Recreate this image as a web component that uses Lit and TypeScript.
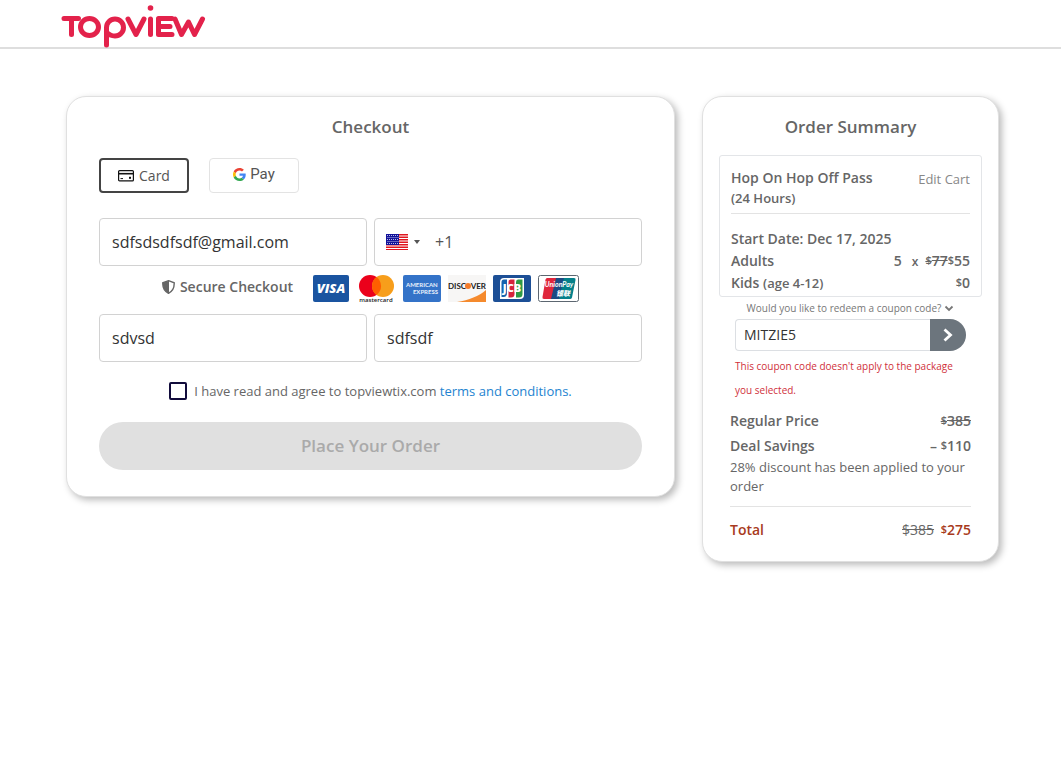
import { LitElement, html, css, svg } from "lit";
import { customElement, state } from "lit/decorators.js";

const logo = html`<svg class="logo" width="146" height="44" viewBox="0 0 146 44" role="img" aria-label="TopView">
  <g fill="none" stroke="#e3224b" stroke-width="5" stroke-linecap="round" stroke-linejoin="round">
    <path d="M4 13.500H18.500M11.500 13.500V29.500" />
    <ellipse cx="29.500" cy="22" rx="9" ry="8.500" />
    <path d="M46.500 40V22.500A8.500 8.500 0 1 1 55 31C51.500 31 49 30 46.500 27" />
    <path d="M68 14L76 29.500L84 14" />
    <path d="M90.500 14V29.500" />
    <path d="M112 13.500H98.500V29.500H112M98.500 21.500H110" />
    <path d="M115 14L121.500 29.500L128.500 17L134.500 29.500L142.500 14" />
  </g>
  <circle cx="90.500" cy="3" r="2.800" fill="#e3224b" />
</svg>`;

const cardIcon = html`<svg width="16" height="12" viewBox="0 0 16 12" aria-hidden="true">
  <rect x="0.600" y="0.600" width="14.800" height="10.300" rx="1" fill="none" stroke="#111" stroke-width="1.200" />
  <path d="M1 3.700H15" stroke="#111" stroke-width="1.600" />
  <path d="M2.500 8.600H5" stroke="#111" stroke-width="1" />
  <rect x="11" y="6.800" width="2" height="2" fill="#111" />
</svg>`;

const googleIcon = html`<svg width="13" height="13" viewBox="0 0 48 48" aria-hidden="true">
  <path fill="#EA4335" d="M24 9.500c3.540 0 6.710 1.220 9.210 3.600l6.850-6.850C35.900 2.380 30.470 0 24 0 14.620 0 6.510 5.380 2.560 13.220l7.980 6.190C12.430 13.720 17.740 9.500 24 9.500z" />
  <path fill="#4285F4" d="M46.980 24.550c0-1.570-.15-3.090-.38-4.550H24v9.020h12.940c-.58 2.960-2.260 5.480-4.780 7.180l7.730 6c4.510-4.180 7.090-10.360 7.090-17.650z" />
  <path fill="#FBBC05" d="M10.530 28.590c-.48-1.450-.76-2.990-.76-4.590s.27-3.140.76-4.590l-7.980-6.190C.92 16.460 0 20.120 0 24c0 3.880.92 7.540 2.560 10.780l7.970-6.190z" />
  <path fill="#34A853" d="M24 48c6.480 0 11.930-2.130 15.890-5.810l-7.730-6c-2.150 1.450-4.920 2.300-8.160 2.300-6.260 0-11.570-4.220-13.470-9.910l-7.980 6.190C6.510 42.620 14.620 48 24 48z" />
</svg>`;

const flag = html`<svg width="22" height="16" viewBox="0 0 22 16" role="img" aria-label="United States">
  <rect width="22" height="16" fill="#fff" />
  ${[0, 2.5, 5, 7.5, 10, 12.5, 15].map((y) => svg`<rect y=${y} width="22" height="1.500" fill="#e0161f" />`)}
  <rect width="13" height="11" fill="#12129a" />
  ${[1, 3, 5, 7, 9].map((y, r) =>
    [1, 3, 5, 7, 9, 11].map((x) => svg`<rect x=${x + (r % 2 ? 0.5 : 0)} y=${y} width="1" height="1" fill="#b9bbe6" />`)
  )}
</svg>`;

const shield = html`<svg width="13" height="14" viewBox="0 0 13 14" aria-hidden="true">
  <path d="M6.500 0.700L12.200 2.800C12.400 7.500 10.600 11.300 6.500 13.300C2.400 11.300 0.600 7.500 0.800 2.800Z" fill="#fff" stroke="#666" stroke-width="1.400" />
  <path d="M7 0.700V13.300C2.400 11.300 0.600 7.500 0.800 2.800Z" fill="#666" />
</svg>`;

const visa = html`<svg width="36" height="27" viewBox="0 0 36 27" role="img" aria-label="Visa">
  <rect width="36" height="27" rx="2" fill="#1a54a0" />
  <text x="18" y="18" text-anchor="middle" font-size="13" font-weight="800" font-style="italic" fill="#fff">VISA</text>
</svg>`;

const mastercard = html`<svg width="40" height="28" viewBox="-3 0 40 28" role="img" aria-label="Mastercard">
  <circle cx="11" cy="11" r="11" fill="#eb001b" />
  <circle cx="24" cy="11" r="11" fill="#f79e1b" />
  <path d="M17.500 2.100A11 11 0 0 1 17.500 19.900A11 11 0 0 1 17.500 2.100Z" fill="#ff5f00" />
  <text x="17" y="27" text-anchor="middle" font-size="6" font-weight="600" fill="#222">mastercard</text>
</svg>`;

const amex = html`<svg width="38" height="27" viewBox="0 0 38 27" role="img" aria-label="American Express">
  <rect width="38" height="27" rx="2" fill="#3473c8" />
  <g class="narrow" fill="#e8f1fc" font-size="6" font-weight="700">
    <text x="3" y="12">AMERICAN</text>
    <text x="35" y="19" text-anchor="end">EXPRESS</text>
  </g>
</svg>`;

const discover = html`<svg width="38" height="27" viewBox="0 0 38 27" role="img" aria-label="Discover">
  <rect width="38" height="27" fill="#f7f6f5" />
  <path d="M38 15V27H9C21 25 31 21 38 15Z" fill="#f58a2d" />
  <g class="narrow" font-size="8" font-weight="700" fill="#222">
    <text x="0" y="14">DISC</text>
    <text x="38" y="14" text-anchor="end">VER</text>
  </g>
  <circle cx="20" cy="11" r="3" fill="#f47b2a" />
</svg>`;

const jcb = html`<svg width="38" height="27" viewBox="0 0 38 27" role="img" aria-label="JCB">
  <rect width="38" height="27" rx="2" fill="#1c4f96" />
  <path d="M11 3H31V20Q31 24 27 24H7V7Q7 3 11 3Z" fill="#fff" />
  <path d="M11 4.500H14V18Q14 22 10.500 22H8.500V7Q8.500 4.500 11 4.500Z" fill="#1763ae" />
  <path d="M17.500 4.500H21.500V19Q21.500 22.500 18 22.500H15.500V7Q15.500 4.500 17.500 4.500Z" fill="#d6223c" />
  <path d="M25 4.500H29.500V19Q29.500 22.500 26 22.500H23V7Q23 4.500 25 4.500Z" fill="#2f9a45" />
  <text x="19" y="17" text-anchor="middle" font-size="11" font-weight="800" fill="#fff">JCB</text>
</svg>`;

const unionpay = html`<svg width="41" height="27" viewBox="0 0 41 27" role="img" aria-label="UnionPay">
  <rect x="0.500" y="0.500" width="40" height="26" rx="2" fill="#fff" stroke="#5c6670" />
  <path d="M9 3H20L15 24H6Q4 24 4.500 22L7.500 4.500Q8 3 9 3Z" fill="#e0263c" />
  <path d="M18 3H28L23 24H13Z" fill="#1d4b83" />
  <path d="M26 3H36Q38 3 37.500 5L34 22.500Q33.500 24 32 24H21Z" fill="#04808a" />
  <text class="narrow" x="21" y="12" text-anchor="middle" font-size="7" font-weight="700" font-style="italic" fill="#fff">UnionPay</text>
  <text class="cjk" x="25" y="21" text-anchor="middle" font-size="7" font-weight="900" font-style="italic" fill="#fff">银联</text>
</svg>`;

@customElement("app-root")
export class AppRoot extends LitElement {
  @state() private agreed = false;

  static styles = css`
    :host {
      display: block;
      font-family: "Open Sans", "Noto Sans", sans-serif;
      font-size: 14px;
      color: #666;
      background: #fff;
    }
    * { box-sizing: border-box; }
    svg { display: block; flex: none; }
    h1, h2, h3, p { margin: 0; font-weight: inherit; }
    .cjk { font-family: "Noto Sans CJK SC", sans-serif; }
    .narrow { font-family: Lato, sans-serif; }
    .header {
      height: 49px;
      padding: 5px 60px 0;
      border-bottom: 2px solid #dedede;
    }
    .page {
      display: flex;
      align-items: flex-start;
      gap: 27px;
      padding: 47px 62px 48px 66px;
    }
    .panel {
      background: #fff;
      border: 1px solid #e0e0e0;
      border-radius: 20px;
      box-shadow: 3px 3px 7px rgba(0, 0, 0, 0.27);
    }
    .checkout { flex: 1; min-width: 0; padding: 18px 32px 26px; }
    .summary { width: 297px; padding: 18px 16px 19px; }
    .title {
      font-size: 17px;
      font-weight: 600;
      line-height: 24px;
      text-align: center;
    }
    .tabs { display: flex; gap: 20px; margin-top: 19px; }
    .tab {
      display: flex;
      align-items: center;
      justify-content: center;
      gap: 5px;
      width: 90px;
      height: 35px;
      padding: 0;
      border: 1px solid #e3e3e3;
      border-radius: 4px;
      background: #fff;
      font: 14px/20px "Open Sans", sans-serif;
      color: #555;
    }
    .tab.active { border: 2px solid #444; }
    .gpay {
      gap: 4px;
      padding-bottom: 3px;
      font: 15px/18px Roboto, sans-serif;
    }
    .fields {
      display: grid;
      grid-template-columns: 1fr 1fr;
      gap: 7px;
    }
    .fields.first { margin-top: 25px; }
    .fields.second { margin-top: 12px; }
    .field {
      display: flex;
      align-items: center;
      width: 100%;
      min-width: 0;
      height: 48px;
      padding: 0 12px;
      border: 1px solid #d2d2d2;
      border-radius: 4px;
      background: #fff;
      font: 16px/24px "Open Sans", sans-serif;
      color: #333;
    }
    .phone { padding: 0 11px; }
    .country {
      display: flex;
      align-items: center;
      gap: 6px;
      padding: 0;
      border: 0;
      background: none;
    }
    .number {
      flex: 1;
      min-width: 0;
      margin-left: 15px;
      padding: 0;
      border: 0;
      outline: 0;
      font: inherit;
      color: #555;
    }
    .secure {
      display: flex;
      align-items: flex-start;
      justify-content: center;
      height: 27px;
      margin-top: 9px;
      font-weight: 600;
      line-height: 24px;
    }
    .badge { display: flex; align-items: center; gap: 5px; margin-right: 20px; }
    .cards { display: flex; gap: 7px; }
    .terms {
      display: flex;
      align-items: center;
      justify-content: center;
      gap: 7px;
      margin-top: 20px;
      font-size: 13px;
      line-height: 18px;
    }
    .tick {
      appearance: none;
      width: 18px;
      height: 18px;
      margin: 0;
      border: 2px solid #120c3c;
      border-radius: 2px;
      background: #fff;
    }
    .tick:checked { background: #120c3c; }
    .link { color: #2383d0; text-decoration: none; }
    .place {
      display: block;
      width: 100%;
      height: 48px;
      margin-top: 22px;
      border: 0;
      border-radius: 24px;
      background: #e0e0e0;
      font: 600 17px/24px "Open Sans", sans-serif;
      color: #aaa;
    }
    .item {
      padding: 12px 11px 2px;
      margin-top: 16px;
      border: 1px solid #e3e5e8;
      border-radius: 3px;
      font-weight: 600;
      line-height: 22px;
    }
    .item-head {
      display: flex;
      justify-content: space-between;
      padding-bottom: 5px;
      margin-bottom: 14px;
      border-bottom: 1px solid #e3e3e3;
      line-height: 20px;
    }
    .item-title { font-size: 14px; }
    .medium { font-size: 13px; line-height: 1; }
    .edit { font-size: 13px; font-weight: 400; line-height: 22px; color: #888; text-decoration: none; }
    .row { display: flex; justify-content: space-between; }
    .cur { font-size: 11px; vertical-align: 2px; line-height: 0; }
    .times { margin: 0 7px 0 10px; font-size: 12px; line-height: 1; }
    .coupon-toggle {
      display: flex;
      align-items: center;
      justify-content: center;
      gap: 3px;
      width: 100%;
      height: 22px;
      padding: 0;
      border: 0;
      background: none;
      font: 10px/22px "Open Sans", sans-serif;
      color: #777;
    }
    .coupon { display: flex; height: 32px; margin: 0 16px; }
    .code {
      flex: 1;
      min-width: 0;
      padding: 0 8px;
      border: 1px solid #dcdfe3;
      border-right: 0;
      border-radius: 4px 0 0 4px;
      font: 14px/20px "Open Sans", sans-serif;
      color: #333;
    }
    .apply {
      display: flex;
      align-items: center;
      justify-content: center;
      width: 36px;
      padding: 0;
      border: 0;
      border-radius: 0 16px 16px 0;
      background: #6c757d;
    }
    .error {
      margin: 3px 16px 0;
      font-size: 10px;
      line-height: 24px;
      color: #d0303a;
    }
    .totals {
      margin: 6px 11px 0;
      font-weight: 600;
      line-height: 25px;
    }
    .note { font-size: 13px; font-weight: 400; line-height: 19px; }
    .total {
      margin-top: 10px;
      padding-top: 10px;
      border-top: 1px solid #e3e3e3;
      color: #a83a20;
    }
    .was { margin-right: 3px; font-weight: 400; color: #666; }
  `;

  render() {
    return html`
      <header class="header">${logo}</header>
      <main class="page">
        <section class="panel checkout">
          <h1 class="title">Checkout</h1>
          <div class="tabs">
            <button class="tab active" type="button">${cardIcon}<span>Card</span></button>
            <button class="tab gpay" type="button" aria-label="Google Pay">${googleIcon}<span>Pay</span></button>
          </div>
          <div class="fields first">
            <input class="field" type="email" aria-label="Email" .value=${"sdfsdsdfsdf@gmail.com"} />
            <div class="field phone">
              <button class="country" type="button" aria-label="Country code">
                ${flag}
                <svg width="6" height="4" viewBox="0 0 6 4"><path d="M0 0H6L3 4Z" fill="#555" /></svg>
              </button>
              <input class="number" type="tel" aria-label="Phone number" .value=${"+1"} />
            </div>
          </div>
          <div class="secure">
            <span class="badge">${shield}<span>Secure Checkout</span></span>
            <span class="cards">${visa}${mastercard}${amex}${discover}${jcb}${unionpay}</span>
          </div>
          <div class="fields second">
            <input class="field" type="text" aria-label="First name" .value=${"sdvsd"} />
            <input class="field" type="text" aria-label="Last name" .value=${"sdfsdf"} />
          </div>
          <div class="terms">
            <input
              id="agree"
              class="tick"
              type="checkbox"
              .checked=${this.agreed}
              @change=${(e: Event) => (this.agreed = (e.target as HTMLInputElement).checked)}
            />
            <label for="agree">I have read and agree to topviewtix.com <a class="link" href="#terms">terms and conditions.</a></label>
          </div>
          <button class="place" type="button" ?disabled=${!this.agreed}>Place Your Order</button>
        </section>

        <aside class="panel summary">
          <h2 class="title">Order Summary</h2>
          <div class="item">
            <div class="item-head">
              <h3 class="item-title">Hop On Hop Off Pass<br /><span class="medium">(24 Hours)</span></h3>
              <a class="edit" href="#cart">Edit Cart</a>
            </div>
            <p>Start Date: Dec 17, 2025</p>
            <div class="row">
              <span>Adults</span>
              <span>5<span class="times">x</span><s><span class="cur">$</span>77</s><span class="cur">$</span>55</span>
            </div>
            <div class="row">
              <span>Kids <span class="medium">(age 4-12)</span></span>
              <span><span class="cur">$</span>0</span>
            </div>
          </div>
          <button class="coupon-toggle" type="button">
            Would you like to redeem a coupon code?
            <svg width="10" height="7" viewBox="0 0 10 7"><path d="M1.500 1.500L5 5L8.500 1.500" fill="none" stroke="#777" stroke-width="1.800" /></svg>
          </button>
          <div class="coupon">
            <input class="code" type="text" aria-label="Coupon code" .value=${"MITZIE5"} />
            <button class="apply" type="button" aria-label="Apply coupon">
              <svg width="10" height="14" viewBox="0 0 10 14"><path d="M1.500 1.500L7.500 7L1.500 12.500" fill="none" stroke="#fff" stroke-width="2.800" /></svg>
            </button>
          </div>
          <p class="error" role="alert">This coupon code doesn't apply to the package you selected.</p>
          <div class="totals">
            <div class="row"><span>Regular Price</span><s><span class="cur">$</span>385</s></div>
            <div class="row"><span>Deal Savings</span><span>– <span class="cur">$</span>110</span></div>
            <p class="note">28% discount has been applied to your order</p>
            <div class="row total">
              <span>Total</span>
              <span><s class="was">$385</s> <span class="cur">$</span>275</span>
            </div>
          </div>
        </aside>
      </main>
    `;
  }
}
